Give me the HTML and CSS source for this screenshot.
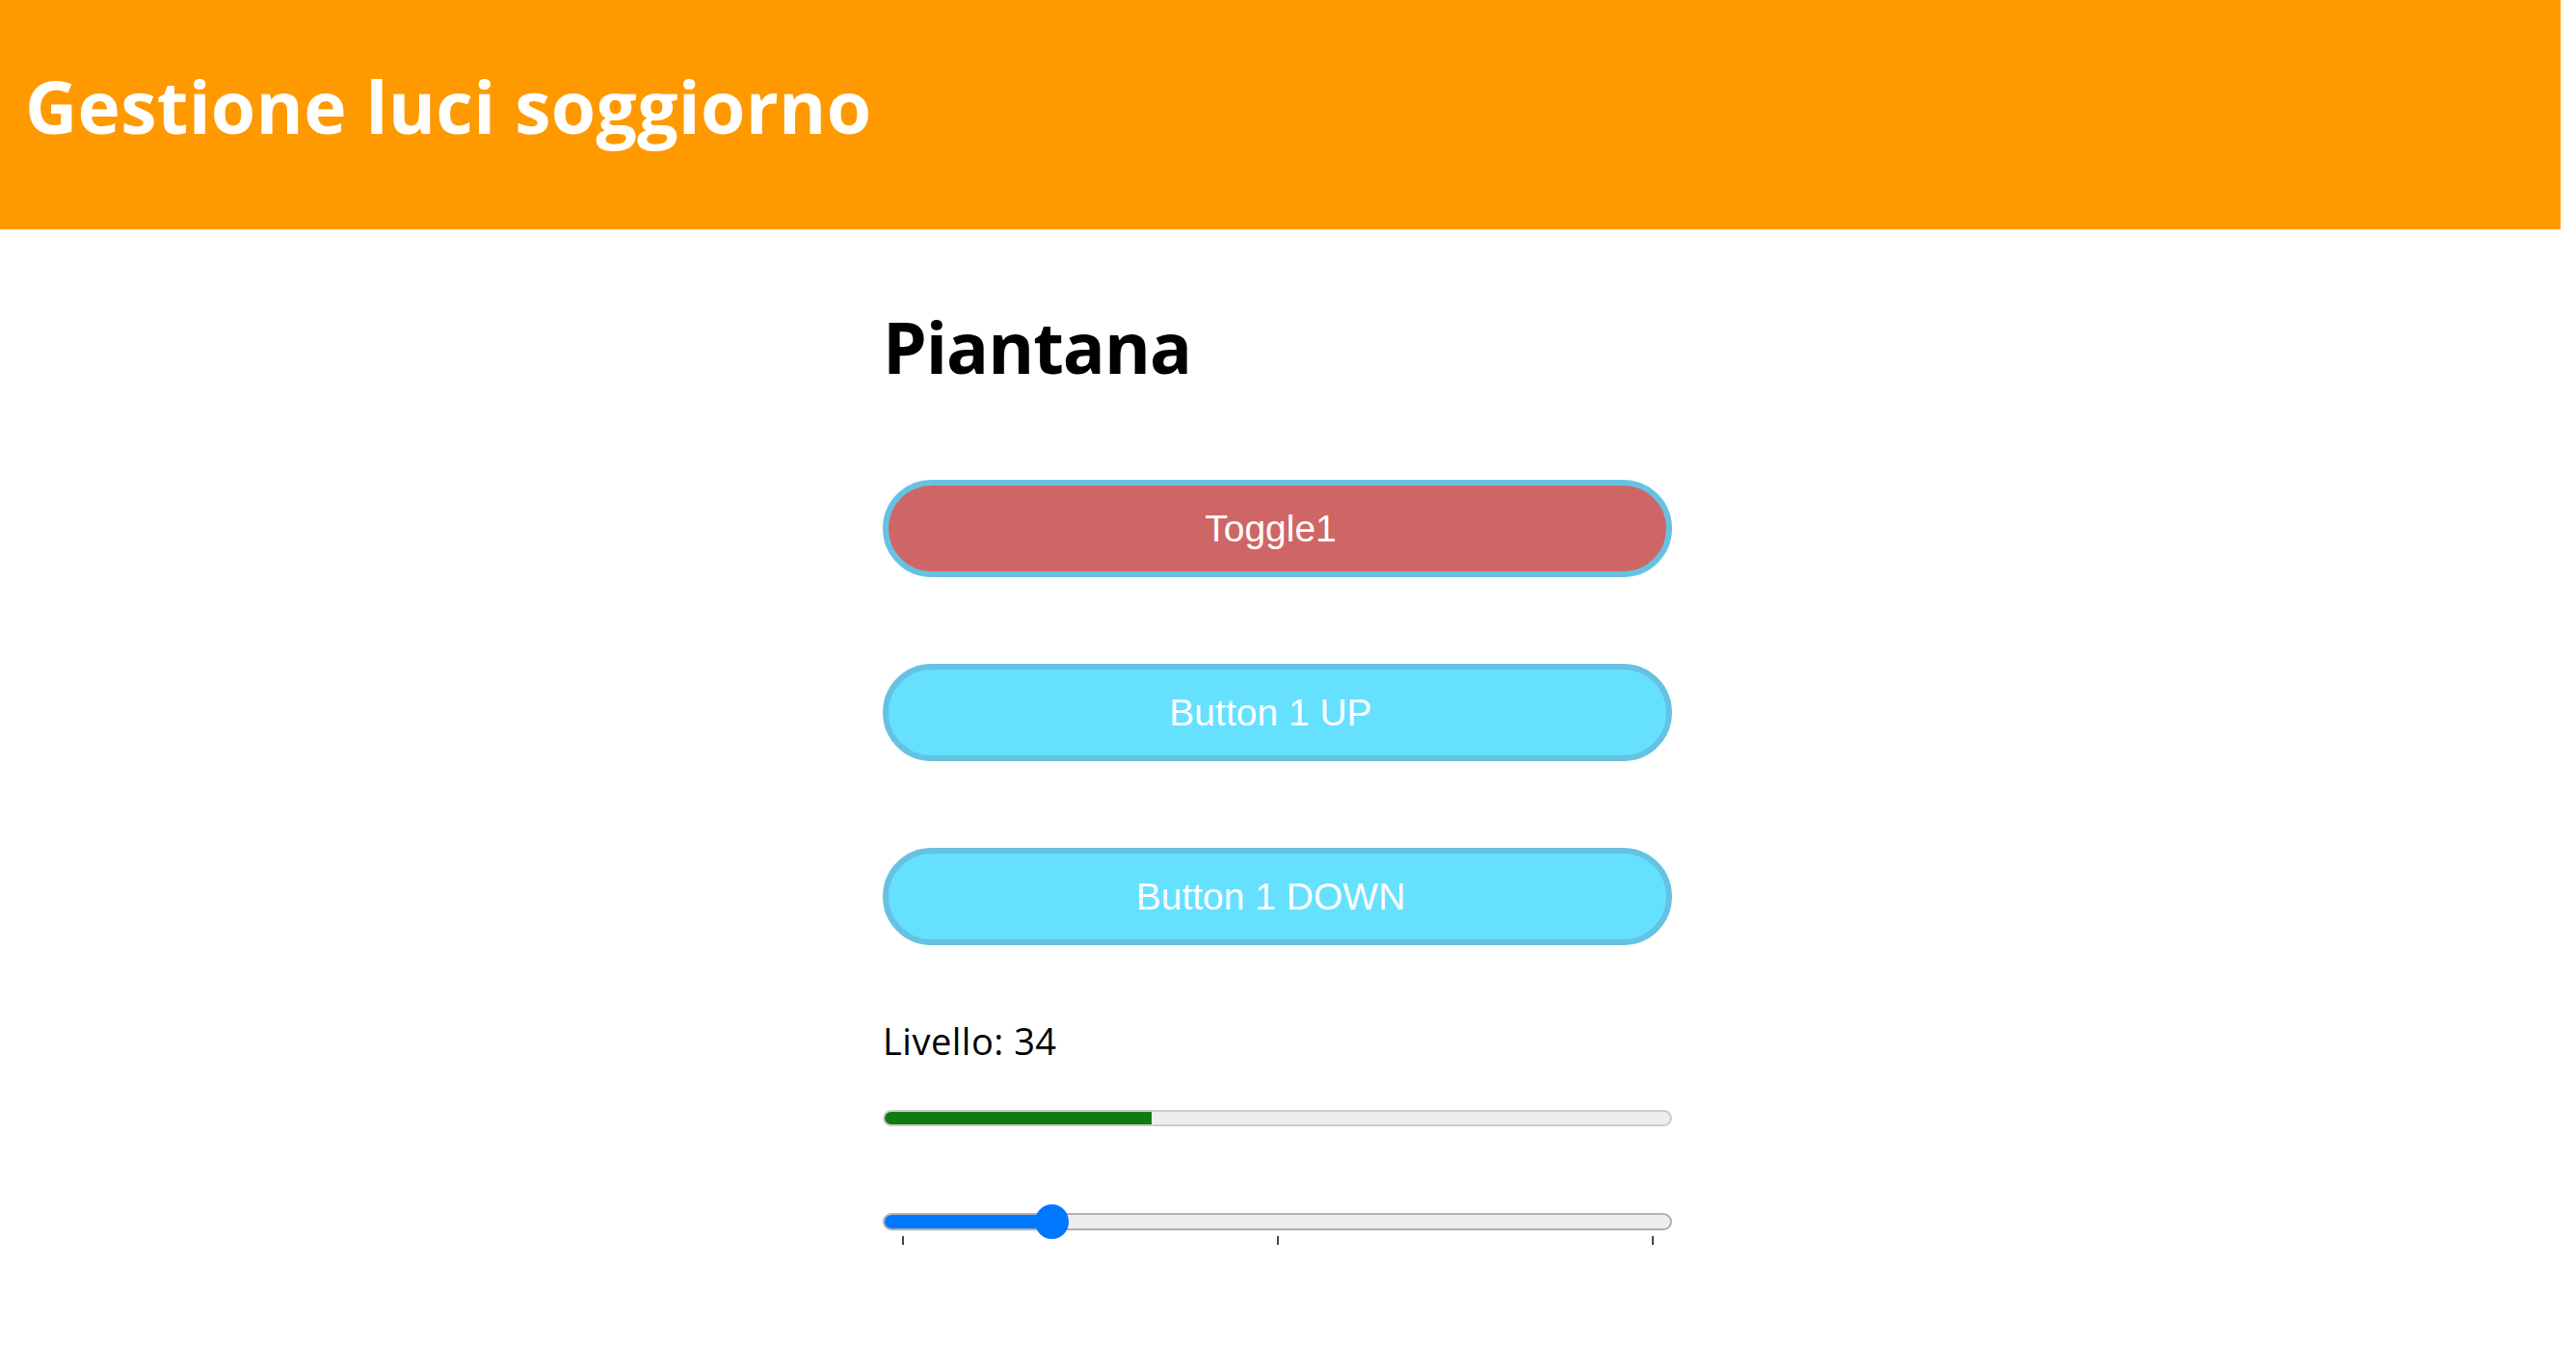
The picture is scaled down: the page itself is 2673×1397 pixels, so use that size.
FILE: index.html
```html
<!DOCTYPE html>
<html lang="it">
<head>
<meta charset="utf-8">
<title>Gestione luci soggiorno</title>
<link rel="stylesheet" href="styles.css">
</head>
<body>
<div class="page">
  <header class="topbar">
    <h1 class="title">Gestione luci soggiorno</h1>
  </header>
  <main class="content">
    <h2 class="section-title">Piantana</h2>
    <button class="pill pill-toggle" type="button">Toggle1</button>
    <button class="pill pill-action" type="button">Button 1 UP</button>
    <button class="pill pill-action" type="button">Button 1 DOWN</button>
    <p class="level">Livello: 34</p>
    <div class="progress"><div class="progress-fill" style="width:34%"></div></div>
    <div class="slider">
      <div class="slider-track"><div class="slider-fill" style="width:176px"></div></div>
      <div class="slider-thumb" style="left:158px"></div>
      <div class="ticks"><span class="tick"></span><span class="tick"></span><span class="tick"></span></div>
    </div>
  </main>
</div>
</body>
</html>
```
FILE: styles.css
```css
* { box-sizing: border-box; }
html, body { margin: 0; padding: 0; background: #fff; }
body { font-family: "Open Sans", "Noto Sans", sans-serif; color: #000; }

.page { padding-right: 16px; }

.topbar {
  height: 238px;
  background: #ff9900;
  padding: 73px 0 0 26px;
}
.title {
  margin: 0;
  font-size: 75px;
  line-height: 74px;
  font-weight: 700;
  letter-spacing: 0.3px;
  color: #fff;
}

.content {
  width: 819px;
  margin: 0 auto;
  position: relative;
  left: -3px;
  display: flex;
  flex-direction: column;
}

.section-title {
  margin: 84px 0 0 0;
  font-size: 73px;
  line-height: 75px;
  font-weight: 700;
  letter-spacing: -1px;
}

.pill {
  display: block;
  width: 819px;
  height: 101px;
  border: 6px solid #66c2e2;
  border-radius: 51px;
  font-family: "Liberation Sans", Arial, sans-serif;
  font-size: 39px;
  color: #fff;
  padding: 0 14px 0 0;
  margin: 90px 0 0 0;
}
.pill-toggle { background: #cf6666; margin-top: 101px; }
.pill-action { background: #66e0ff; }

.level {
  margin: 80px 0 0 0;
  font-size: 38px;
  line-height: 38px;
  letter-spacing: 0.5px;
}

.progress {
  margin-top: 53px;
  height: 17px;
  border: 2px solid #cccccc;
  border-radius: 9px;
  background: #eeeeee;
  overflow: hidden;
}
.progress-fill { height: 100%; background: #127a12; }

.slider {
  margin-top: 90px;
  position: relative;
}
.slider-track {
  height: 18px;
  border: 2px solid #b0b0b0;
  border-radius: 9px;
  background: #eeeeee;
  overflow: hidden;
}
.slider-fill { height: 100%; background: #0077ff; }
.slider-thumb {
  position: absolute;
  top: -9px;
  width: 35px;
  height: 36px;
  border-radius: 50%;
  background: #0077ff;
}
.ticks {
  display: flex;
  justify-content: space-between;
  padding: 6px 19px 0 20px;
}
.tick { width: 2px; height: 9px; background: #444; }
```
